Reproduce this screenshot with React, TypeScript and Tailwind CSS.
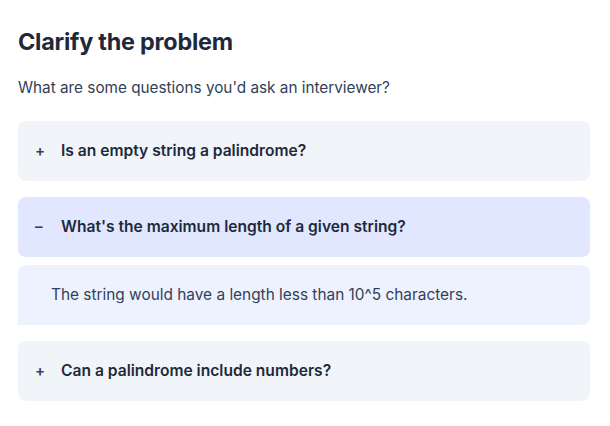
import { useState } from 'react';

const items = [
  { q: 'Is an empty string a palindrome?', a: 'Yes, an empty string is considered a palindrome.' },
  { q: "What's the maximum length of a given string?", a: 'The string would have a length less than 10^5 characters.' },
  { q: 'Can a palindrome include numbers?', a: 'Yes, the string may contain digits as well as letters.' },
];

export default function App() {
  const [open, setOpen] = useState<number | null>(1);

  return (
    <div className="min-h-screen bg-white px-[18px] pt-[26px] font-['Inter',sans-serif] text-slate-800">
      <h2 className="text-[23.4px] font-bold leading-8 tracking-[-0.01em] text-[#1e293b]">Clarify the problem</h2>
      <p className="mt-[18px] text-[15.3px] leading-6 text-slate-700">What are some questions you'd ask an interviewer?</p>

      <div className="mt-[21px] flex w-[572px] flex-col gap-4">
        {items.map((item, i) => {
          const isOpen = open === i;
          return (
            <div key={i} className="flex flex-col gap-2">
              <button
                onClick={() => setOpen(isOpen ? null : i)}
                className={`flex h-[60px] items-center rounded-lg pl-[17px] text-left ${isOpen ? 'bg-[#e0e7ff]' : 'bg-[#f1f5f9]'}`}
              >
                <span className="w-[26px] text-left text-[15px] font-semibold text-slate-700">{isOpen ? '–' : '+'}</span>
                <span className="text-[15.6px] font-semibold text-[#1e293b]">{item.q}</span>
              </button>
              {isOpen && (
                <div className="flex h-[60px] items-center rounded-lg rounded-bl-none bg-[#eef2ff] pl-[33px] text-[15.4px] text-slate-700">
                  {item.a}
                </div>
              )}
            </div>
          );
        })}
      </div>
    </div>
  );
}
